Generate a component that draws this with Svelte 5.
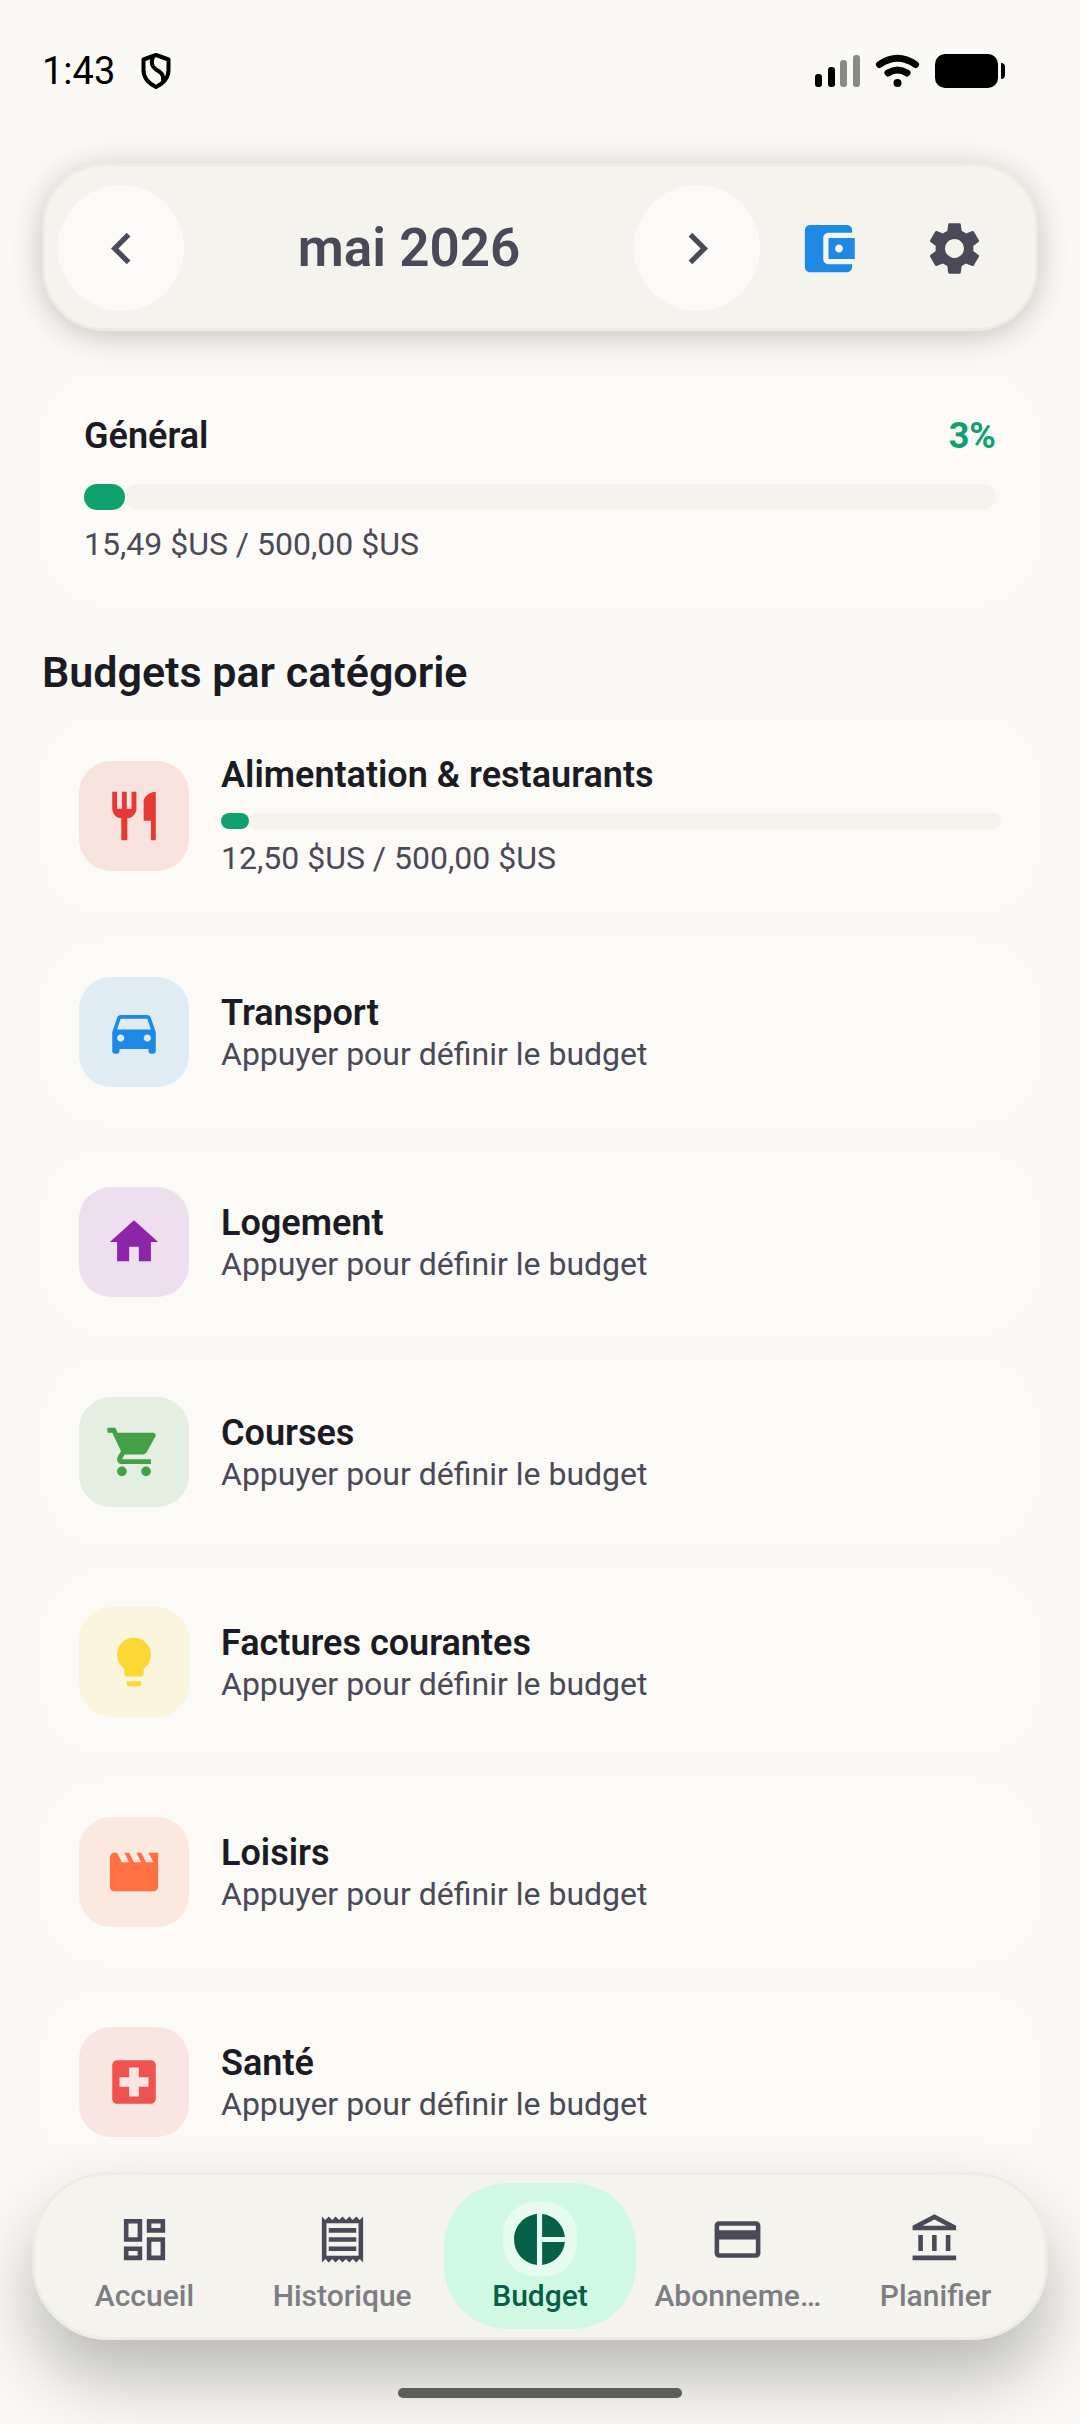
<div class="screen">
	<div class="status">
		<span class="time">1:43</span>
		<svg class="shield" viewBox="0 0 30 36" aria-hidden="true">
			<path d="M15 2 L27.5 6.500 V17 C27.500 25 22 30.500 15 34 C8 30.500 2.500 25 2.500 17 V6.500 Z" />
			<path d="M12 3.500 C10 9 11 14 15 16.500 C19.500 19 23 21 22 28" />
		</svg>
		<svg class="signal" viewBox="0 0 190 36" aria-hidden="true">
			<rect x="0" y="21" width="7" height="13" rx="3" />
			<rect x="13" y="14" width="7" height="20" rx="3" />
			<rect class="dim" x="25" y="7" width="7" height="27" rx="3" />
			<rect class="dim" x="38" y="2" width="7" height="32" rx="3" />
			<path class="wave" d="M64.500 11.500 Q82.500 -1 100.500 11.500" />
			<path class="wave" d="M73 20 Q82.500 14 92 20" />
			<circle cx="82.500" cy="30" r="4" />
			<rect x="120" y="1" width="63" height="34" rx="10" />
			<path d="M186 10 Q190 10 190 14 V22 Q190 26 186 26 Z" />
		</svg>
	</div>

	<header>
		<button class="round" aria-label="Mois précédent">
			<svg viewBox="0 0 24 24"><path d={icons.left} /></svg>
		</button>
		<h1>{month}</h1>
		<button class="round" aria-label="Mois suivant">
			<svg viewBox="0 0 24 24"><path d={icons.right} /></svg>
		</button>
		<div class="tools">
			<button class="wallet" aria-label="Comptes">
				<svg viewBox="0 0 24 24"><path d={icons.wallet} /></svg>
			</button>
			<button aria-label="Réglages">
				<svg viewBox="0 0 24 24"><path d={icons.settings} /></svg>
			</button>
		</div>
	</header>

	<main>
		<section class="card general">
			<div class="row">
				<h3>Général</h3>
				<span class="percent">{Math.round(percent(general))}%</span>
			</div>
			<div class="bar" role="progressbar" aria-label="Général" aria-valuenow={percent(general)}>
				<div class="fill" style:--done="{percent(general)}%"></div>
				<div class="track"></div>
			</div>
			<p>{amount(general.spent)} / {amount(general.limit)}</p>
		</section>

		<h2>Budgets par catégorie</h2>

		<div class="list">
			{#each categories as item}
				<button class="card category">
					<span class="tile" style:--tint={item.color}>
						<svg viewBox="0 0 24 24"><path d={item.icon} /></svg>
					</span>
					<span class="detail">
						<span class="name">{item.name}</span>
						{#if item.limit}
							<span class="bar thin" role="progressbar" aria-label={item.name} aria-valuenow={percent(item)}>
								<span class="fill" style:--done="{percent(item)}%"></span>
								<span class="track"></span>
							</span>
							<span class="sub">{amount(item.spent)} / {amount(item.limit)}</span>
						{:else}
							<span class="sub">Appuyer pour définir le budget</span>
						{/if}
					</span>
				</button>
			{/each}
		</div>
	</main>

	<footer>
		<nav>
			{#each tabs as tab}
				<button class="tab" class:active={tab.name === current} on:click={() => current = tab.name}>
					<span class="badge">
						<svg viewBox="0 0 24 24"><path d={tab.icon} /></svg>
					</span>
					<span class="label">{tab.name}</span>
				</button>
			{/each}
		</nav>
		<div class="handle"></div>
	</footer>
</div>

<script>
	const month = 'mai 2026'
	const general = { spent: 15.49, limit: 500 }
	let current = 'Budget'

	const icons = {
		left: 'M15.410 16.590 10.830 12l4.580-4.590L14 6l-6 6 6 6z',
		right: 'M8.590 16.590 13.170 12 8.590 7.410 10 6l6 6-6 6z',
		wallet: 'M21 18v1c0 1.100-.9 2-2 2H5c-1.110 0-2-.9-2-2V5c0-1.100.89-2 2-2h14c1.100 0 2 .9 2 2v1h-9c-1.110 0-2 .9-2 2v8c0 1.100.89 2 2 2h9zm-9-2h10V8H12v8zm4-2.500c-.83 0-1.500-.67-1.500-1.500s.67-1.500 1.500-1.500 1.500.67 1.500 1.500-.67 1.500-1.500 1.500z',
		settings: 'M19.140 12.940c.04-.3.06-.61.06-.94 0-.32-.02-.64-.07-.94l2.030-1.580c.18-.14.23-.41.12-.61l-1.920-3.320c-.12-.22-.37-.29-.59-.22l-2.390.96c-.5-.38-1.030-.7-1.620-.94l-.36-2.540c-.04-.24-.24-.41-.48-.41h-3.840c-.24 0-.43.17-.47.41l-.36 2.540c-.59.24-1.130.57-1.620.94l-2.390-.96c-.22-.08-.47 0-.59.22L2.740 8.870c-.12.21-.08.47.12.61l2.030 1.580c-.05.3-.09.63-.09.94s.02.64.07.94l-2.030 1.580c-.18.14-.23.41-.12.61l1.920 3.320c.12.22.37.29.59.22l2.390-.96c.5.38 1.030.7 1.620.94l.36 2.540c.05.24.24.41.48.41h3.840c.24 0 .44-.17.47-.41l.36-2.540c.59-.24 1.130-.56 1.620-.94l2.390.96c.22.08.47 0 .59-.22l1.920-3.320c.12-.22.07-.47-.12-.61l-2.010-1.580zM12 15.600c-1.980 0-3.600-1.620-3.600-3.600s1.620-3.600 3.600-3.600 3.600 1.620 3.600 3.600-1.620 3.600-3.600 3.600z'
	}

	const categories = [
		{
			name: 'Alimentation & restaurants',
			color: '#e53935',
			spent: 12.5,
			limit: 500,
			icon: 'M16 6v8h3v8h2V2c-2.760 0-5 2.240-5 4zm-5 3H9V2H7v7H5V2H3v7c0 2.120 1.660 3.840 3.750 3.970V22h2.500v-9.030C11.340 12.840 13 11.120 13 9V2h-2v7z'
		},
		{
			name: 'Transport',
			color: '#1e88e5',
			icon: 'M18.920 6.010C18.720 5.420 18.160 5 17.500 5h-11c-.66 0-1.210.42-1.420 1.010L3 12v8c0 .55.45 1 1 1h1c.55 0 1-.45 1-1v-1h12v1c0 .55.45 1 1 1h1c.55 0 1-.45 1-1v-8l-2.080-5.990zM6.500 16c-.83 0-1.500-.67-1.500-1.500S5.670 13 6.500 13s1.500.67 1.500 1.500S7.330 16 6.500 16zm11 0c-.83 0-1.500-.67-1.500-1.500s.67-1.500 1.500-1.500 1.500.67 1.500 1.500-.67 1.500-1.500 1.500zM5 11l1.500-4.500h11L19 11H5z'
		},
		{
			name: 'Logement',
			color: '#8e24aa',
			icon: 'M10 20v-6h4v6h5v-8h3L12 3 2 12h3v8z'
		},
		{
			name: 'Courses',
			color: '#43a047',
			icon: 'M7 18c-1.100 0-1.990.9-1.990 2S5.900 22 7 22s2-.9 2-2-.9-2-2-2zM1 2v2h2l3.600 7.590-1.350 2.450c-.16.28-.25.61-.25.96 0 1.100.9 2 2 2h12v-2H7.420c-.14 0-.25-.11-.25-.25l.03-.12.9-1.630h7.450c.75 0 1.410-.41 1.750-1.030l3.580-6.490c.08-.14.12-.31.12-.48 0-.55-.45-1-1-1H5.210l-.94-2H1zm16 16c-1.100 0-1.990.9-1.990 2s.89 2 1.990 2 2-.9 2-2-.9-2-2-2z'
		},
		{
			name: 'Factures courantes',
			color: '#fdd835',
			icon: 'M9 21c0 .5.4 1 1 1h4c.6 0 1-.5 1-1v-1H9v1zm3-19C8.100 2 5 5.100 5 9c0 2.380 1.190 4.470 3 5.740V17c0 .5.4 1 1 1h6c.6 0 1-.5 1-1v-2.260c1.810-1.270 3-3.360 3-5.740 0-3.900-3.100-7-7-7z'
		},
		{
			name: 'Loisirs',
			color: '#ff7043',
			icon: 'M18 4l2 4h-3l-2-4h-2l2 4h-3l-2-4H8l2 4H7L5 4H4c-1.100 0-1.990.9-1.990 2L2 18c0 1.100.9 2 2 2h16c1.100 0 2-.9 2-2V4h-4z'
		},
		{
			name: 'Santé',
			color: '#ef5350',
			icon: 'M19 3H5c-1.100 0-1.990.9-1.990 2L3 19c0 1.100.9 2 2 2h14c1.100 0 2-.9 2-2V5c0-1.100-.9-2-2-2zm-1 11h-4v4h-4v-4H6v-4h4V6h4v4h4v4z'
		}
	]

	const tabs = [
		{
			name: 'Accueil',
			icon: 'M19 5v2h-4V5h4M9 5v6H5V5h4m10 8v6h-4v-6h4M9 17v2H5v-2h4M21 3h-8v6h8V3zM11 3H3v10h8V3zm10 8h-8v10h8V11zm-10 4H3v6h8v-6z'
		},
		{
			name: 'Historique',
			icon: 'M19.500 3.500L18 2l-1.500 1.500L15 2l-1.500 1.500L12 2l-1.500 1.500L9 2 7.500 3.500 6 2 4.500 3.500 3 2v20l1.500-1.500L6 22l1.500-1.500L9 22l1.500-1.500L12 22l1.500-1.500L15 22l1.500-1.500L18 22l1.500-1.500L21 22V2l-1.500 1.500zM19 19.090H5V4.910h14v14.180zM6 15h12v2H6zm0-4h12v2H6zm0-4h12v2H6z'
		},
		{
			name: 'Budget',
			icon: 'M11 2v20c-5.070-.5-9-4.790-9-10s3.930-9.500 9-10zm2.030 0v8.990H22c-.47-4.740-4.240-8.520-8.970-8.990zm0 11.010V22c4.740-.47 8.500-4.250 8.970-8.990h-8.970z'
		},
		{
			name: 'Abonneme…',
			icon: 'M20 4H4c-1.110 0-1.990.89-1.990 2L2 18c0 1.110.89 2 2 2h16c1.110 0 2-.89 2-2V6c0-1.110-.89-2-2-2zm0 14H4v-6h16v6zm0-10H4V6h16v2z'
		},
		{
			name: 'Planifier',
			icon: 'M6.500 10h-2v7h2v-7zm6 0h-2v7h2v-7zm8.500 9H2v2h19v-2zm-2.500-9h-2v7h2v-7zm-7-6.740L16.710 6H6.290l5.210-2.740m0-2.260L2 6v2h19V6l-9.500-5z'
		}
	]

	const percent = ({ spent, limit }) => spent / limit * 100
	const amount = value => value.toFixed(2).replace('.', ',') + ' $US'
</script>

<style>
	:global(body) {
		margin: 0;
		background: #faf9f5;
	}
	.screen {
		display: flex;
		flex-direction: column;
		height: 100vh;
		overflow: hidden;
		color: #1b1b23;
		font-family: Roboto, sans-serif;
	}
	h1, h2, h3, p {
		margin: 0;
	}
	button {
		margin: 0;
		padding: 0;
		border: 0;
		background: none;
		color: inherit;
		font: inherit;
		text-align: left;
		cursor: pointer;
	}
	svg {
		display: block;
		fill: currentColor;
	}
	.status {
		display: flex;
		flex: none;
		align-items: center;
		height: 142px;
		padding: 0 75px 0 42px;
		color: #000;
	}
	.time {
		font-size: 38px;
	}
	.shield {
		width: 30px;
		height: 36px;
		margin-left: 26px;
		fill: none;
		stroke: #000;
		stroke-width: 4;
		stroke-linejoin: round;
	}
	.signal {
		width: 190px;
		height: 36px;
		margin-left: auto;
	}
	.dim {
		opacity: 0.45;
	}
	.wave {
		fill: none;
		stroke: #000;
		stroke-width: 7;
		stroke-linecap: round;
	}
	header {
		display: flex;
		flex: none;
		align-items: center;
		box-sizing: border-box;
		height: 168px;
		margin: 21px 42px 0;
		padding: 2px 18px 0 13px;
		border: 3px solid #ecece2;
		border-radius: 63px;
		background: #f4f3ee;
		box-shadow: 0 5px 32px rgba(0, 0, 0, 0.22);
		color: #4a4957;
	}
	header button {
		display: grid;
		place-items: center;
		width: 126px;
		height: 126px;
		border-radius: 50%;
	}
	header svg {
		width: 63px;
		height: 63px;
	}
	.round {
		background: #fbfaf8;
	}
	.tools {
		display: flex;
		margin-left: 5px;
	}
	.wallet {
		color: #1e88e5;
	}
	h1 {
		flex: 1;
		font-size: 53px;
		font-weight: 600;
		text-align: center;
	}
	main {
		flex: 1;
		min-height: 0;
		padding: 42px 42px 0;
		overflow-y: auto;
		scrollbar-width: none;
	}
	.card {
		box-sizing: border-box;
		width: 100%;
		border-radius: 63px;
		background: #fbfaf6;
	}
	.general {
		padding: 42px;
	}
	.row {
		display: flex;
		justify-content: space-between;
	}
	h3, .percent, .name {
		font-size: 36px;
		font-weight: 600;
		line-height: 43px;
	}
	.percent {
		color: #0fa070;
		font-weight: 700;
	}
	.bar {
		--size: 26px;
		display: flex;
		height: var(--size);
		margin: 26px 0 15px;
	}
	.bar.thin {
		--size: 16px;
		margin: 16px 0 10px;
	}
	.fill, .track {
		border-radius: 13px;
	}
	.fill {
		width: calc(var(--done) + var(--size) / 2);
		background: #0fa070;
	}
	.track {
		flex: 1;
		background: #f4f3ee;
	}
	p, .sub {
		color: #4a4957;
		font-size: 32px;
		line-height: 38px;
	}
	h2 {
		margin: 42px 0 20px;
		font-size: 43px;
		font-weight: 600;
		line-height: 50px;
	}
	.list {
		display: flex;
		flex-direction: column;
		gap: 26px;
	}
	.category {
		display: flex;
		align-items: center;
		gap: 32px;
		padding: 37px;
	}
	.tile {
		display: grid;
		flex: none;
		place-items: center;
		width: 110px;
		height: 110px;
		border-radius: 32px;
		background: color-mix(in srgb, var(--tint) 12%, transparent);
		color: var(--tint);
	}
	.tile svg {
		width: 58px;
		height: 58px;
	}
	.detail {
		display: flex;
		flex: 1;
		flex-direction: column;
	}
	footer {
		flex: none;
		padding: 21px 32px 26px;
	}
	nav {
		display: grid;
		grid-template-columns: repeat(5, minmax(0, 1fr));
		gap: 5px;
		padding: 8px 13px;
		border: 3px solid #ecece2;
		border-radius: 76px;
		background: #f4f3ee;
		box-shadow: 0 38px 70px rgba(0, 0, 0, 0.26);
	}
	.tab {
		display: flex;
		flex-direction: column;
		align-items: center;
		gap: 3px;
		padding: 19px 8px 16px;
		border-radius: 63px;
		color: #4a4957;
	}
	.tab svg {
		width: 55px;
		height: 55px;
	}
	.badge {
		display: grid;
		place-items: center;
		width: 74px;
		height: 74px;
		border-radius: 32px;
	}
	.label {
		color: #7e7d84;
		font-size: 30px;
		font-weight: 500;
		line-height: 34px;
		white-space: nowrap;
	}
	.tab.active {
		background: #d0f9e3;
		color: #065f46;
	}
	.active .badge {
		background: #e6fcf1;
	}
	.active svg {
		width: 61px;
		height: 61px;
	}
	.active .label {
		color: inherit;
	}
	.handle {
		position: relative;
		width: 284px;
		height: 10px;
		margin: 48px auto 0;
		border-radius: 5px;
		background: #5c5c5a;
	}
</style>
